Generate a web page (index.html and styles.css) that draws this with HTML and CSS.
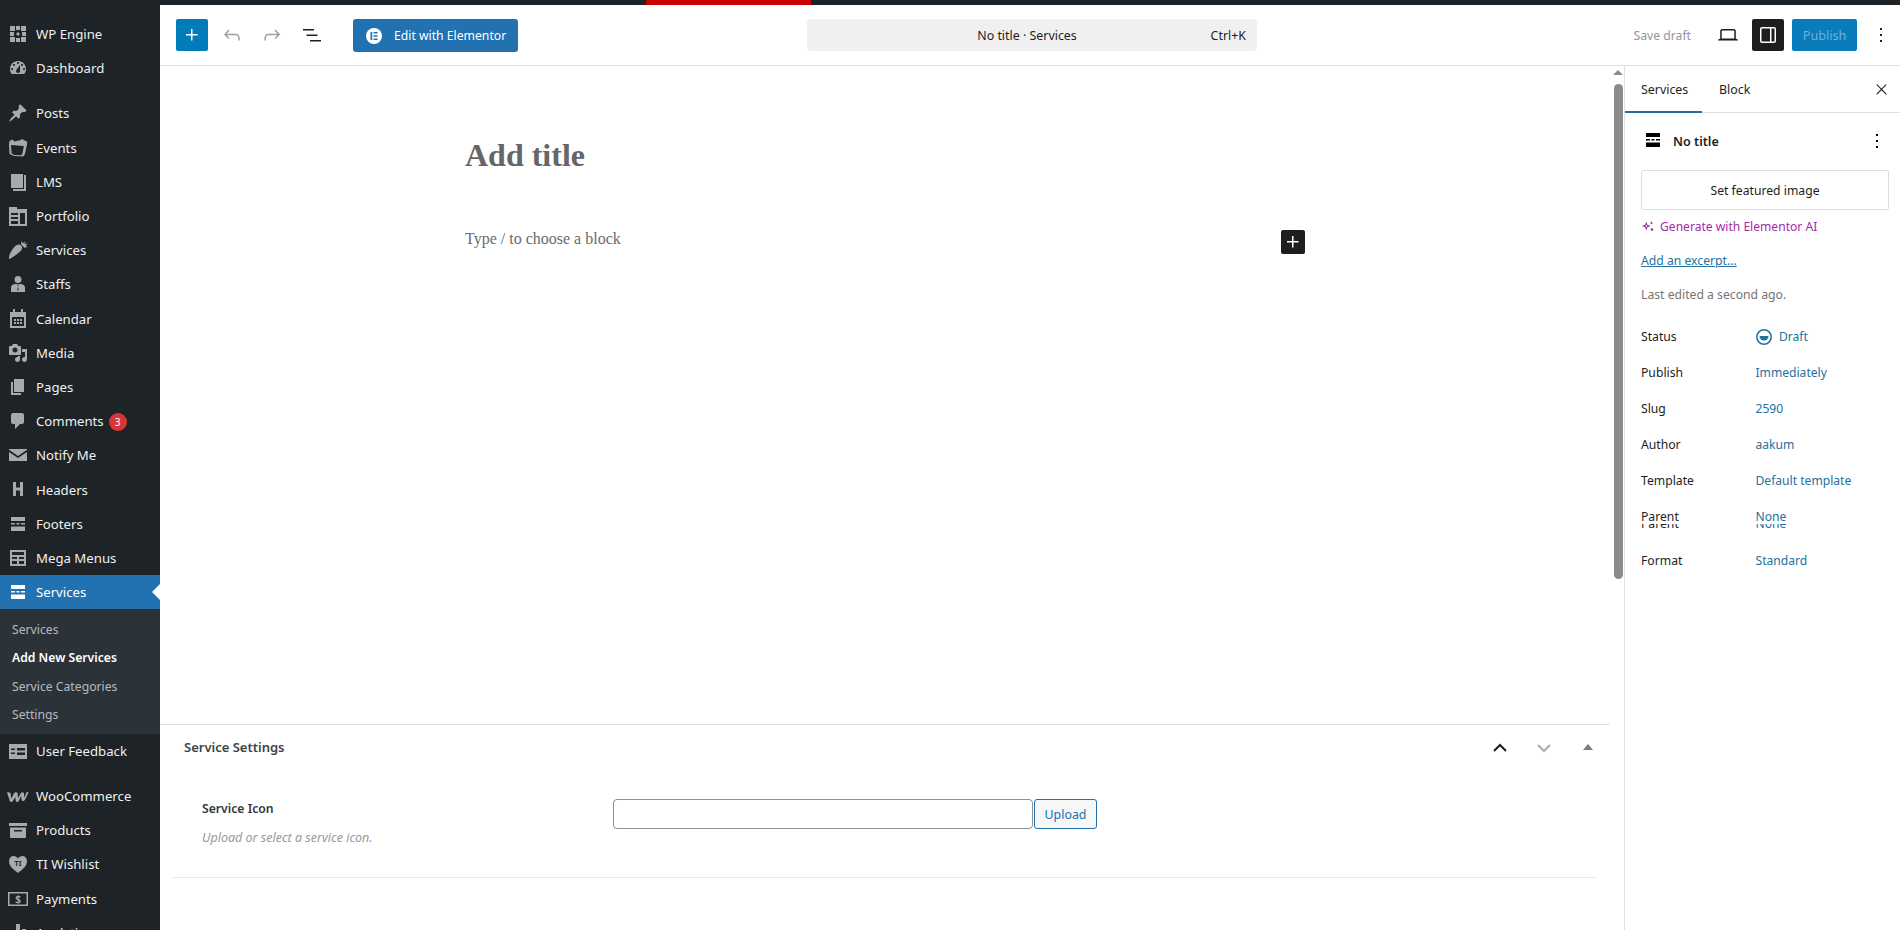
FILE: index.html
```html
<!DOCTYPE html>
<html lang="en">
<head>
<meta charset="utf-8">
<title>Add New Services</title>
<link rel="stylesheet" href="styles.css">
</head>
<body>
<div class="strip"><span class="strip-red"></span></div>
<div class="app">
  <nav class="adminmenu">
    <a class="mi"><svg class="ic" viewBox="0 0 20 20"><path d="M2 2h5v5H2zM8 2h4v4H8zM13 2h5v5h-5zM2 8h4v4H2zM14 8h4v4h-4zM2 13h5v5H2zM8 14h4v4H8zM13 13h5v5h-5zM10 8l2 2-2 2-2-2z"/></svg><span>WP Engine</span></a>
    <a class="mi"><svg class="ic" viewBox="0 0 20 20"><path fill-rule="evenodd" d="M3.76 16h12.48c1.1-1.37 1.76-3.11 1.76-5 0-4.42-3.58-8-8-8s-8 3.58-8 8c0 1.89.66 3.63 1.76 5zM10 4c.55 0 1 .45 1 1s-.45 1-1 1-1-.45-1-1 .45-1 1-1zM6 6c.55 0 1 .45 1 1s-.45 1-1 1-1-.45-1-1 .45-1 1-1zm8 0c.55 0 1 .45 1 1s-.45 1-1 1-1-.45-1-1 .45-1 1-1zm-5.37 5.55L12 7v6c0 1.1-.9 2-2 2s-2-.9-2-2c0-.57.24-1.08.63-1.45zM4 10c.55 0 1 .45 1 1s-.45 1-1 1-1-.45-1-1 .45-1 1-1zm12 0c.55 0 1 .45 1 1s-.45 1-1 1-1-.45-1-1 .45-1 1-1z"/></svg><span>Dashboard</span></a>
    <div class="sep"></div>
    <a class="mi"><svg class="ic" viewBox="0 0 20 20"><path d="M10.44 3.02l1.82-1.82 6.36 6.35-1.83 1.82c-1.05-.68-2.48-.57-3.41.36l-.75.75c-.92.93-1.04 2.35-.35 3.41l-1.83 1.82-2.41-2.41-2.8 2.79c-.42.42-3.38 2.71-3.8 2.29s1.86-3.39 2.28-3.81l2.79-2.79L4.1 9.36l1.83-1.82c1.05.69 2.48.57 3.4-.36l.75-.75c.93-.92 1.05-2.35.36-3.41z"/></svg><span>Posts</span></a>
    <a class="mi"><svg class="ic" viewBox="0 0 20 20"><path fill-rule="evenodd" d="M4 1.500l1.600.9.5 1.100 7-1.400.3-1.100 1.700.2.4 1.100 2.900.6.9 2.200-2.400 11.200-1.700 2.200-9.200-.6L1.600 16 .9 6 1.500 3.200zM3 7l.6 8.300 2.400 1.600 7.300.4 1-1.600L15.900 8z"/></svg><span>Events</span></a>
    <a class="mi"><svg class="ic" viewBox="0 0 20 20"><path d="M3 2h12v14H3zM16 3h2v16H5v-2h11z"/></svg><span>LMS</span></a>
    <a class="mi"><svg class="ic" viewBox="0 0 20 20"><path fill-rule="evenodd" d="M1 1h8v2h10v17H1zM3 7v2h7V7zm0 4v2h7v-2zm0 4v3h7v-3zM12 7v11h5V7z"/></svg><span>Portfolio</span></a>
    <a class="mi"><svg class="ic" viewBox="0 0 20 20"><path d="M1 19c-.5-2 1-6 3-9s4-5 6-5.500c1.500-.3 3.500.7 4 2.500.3 1.500-.5 3-2 4.500-3 3-8 6.500-11 7.500zM13 4.500l.5-3.500 1.300 2.500L17 1l-.5 3 3-.5-2 2.500 2.500.7-3.500 1z"/></svg><span>Services</span></a>
    <a class="mi"><svg class="ic" viewBox="0 0 20 20"><path fill-rule="evenodd" d="M10 2a3.500 3.500 0 1 1 0 7 3.500 3.500 0 0 1 0-7zM3 18v-4.500C3 11.500 5 10 7.500 10h5c2.500 0 4.500 1.500 4.500 3.500V18zM9 10.500l1 1.500-.6 4 .6 1 .6-1-.6-4 1-1.500z"/></svg><span>Staffs</span></a>
    <a class="mi"><svg class="ic" viewBox="0 0 20 20"><path fill-rule="evenodd" d="M5 0h2v3h6V0h2v3h3v16H2V3h3zM4 8v9h12V8zM6 10h2v2H6zm3 0h2v2H9zm3 0h2v2h-2zm-6 3h2v2H6zm3 0h2v2H9zm3 0h2v2h-2z"/></svg><span>Calendar</span></a>
    <a class="mi"><svg class="ic" viewBox="0 0 20 20"><path fill-rule="evenodd" d="M13 11V4c0-.55-.45-1-1-1h-1.670L9 1H5L3.670 3H2c-.55 0-1 .45-1 1v7c0 .55.45 1 1 1h10c.55 0 1-.45 1-1zM7 4.500c1.380 0 2.500 1.120 2.500 2.500S8.380 9.500 7 9.500 4.500 8.380 4.500 7 5.620 4.500 7 4.500zM14 6h5v10.500c0 1.380-1.120 2.500-2.500 2.500S14 17.880 14 16.500s1.120-2.500 2.500-2.500c.17 0 .34.02.5.05V9h-3V6zm-4 8.050V13h2v3.500c0 1.380-1.120 2.500-2.500 2.500S7 17.880 7 16.500 8.120 14 9.500 14c.17 0 .34.02.5.05z"/></svg><span>Media</span></a>
    <a class="mi"><svg class="ic" viewBox="0 0 20 20"><path d="M6 15V2h10v13H6zm-1 1h8v2H3V5h2v11z"/></svg><span>Pages</span></a>
    <a class="mi"><svg class="ic" viewBox="0 0 20 20"><path d="M5 2h9c1.100 0 2 .9 2 2v7c0 1.100-.9 2-2 2h-2l-5 5v-5H5c-1.100 0-2-.9-2-2V4c0-1.100.9-2 2-2z"/></svg><span>Comments</span><b class="badge">3</b></a>
    <a class="mi"><svg class="ic" viewBox="0 0 20 20"><path d="M1 4h18v.8L10 11 1 4.800zM1 7l9 6 9-6v9H1z"/></svg><span>Notify Me</span></a>
    <a class="mi"><svg class="ic" viewBox="0 0 20 20"><path d="M5 3h3v5.500h4V3h3v14h-3v-5.500H8V17H5z"/></svg><span>Headers</span></a>
    <a class="mi"><svg class="ic" viewBox="0 0 20 20"><path d="M3 3h14v4H3zM3 9h4v1.500H3zM8.500 9h3v1.500h-3zM13 9h4v1.500h-4zM3 12.500h14V17H3z"/></svg><span>Footers</span></a>
    <a class="mi"><svg class="ic" viewBox="0 0 20 20"><path fill-rule="evenodd" d="M2 2h16v16H2zM4 4v3h12V4zm0 5v2h5V9zm7 0v2h5V9zm-7 4v3h5v-3zm7 0v3h5v-3z"/></svg><span>Mega Menus</span></a>
    <a class="mi mi-active"><svg class="ic" viewBox="0 0 20 20"><path d="M3 3h14v4H3zM3 9h4v1.500H3zM8.500 9h3v1.500h-3zM13 9h4v1.500h-4zM3 12.500h14V17H3z"/></svg><span>Services</span></a>
    <div class="submenu">
      <a class="si">Services</a>
      <a class="si si-current">Add New Services</a>
      <a class="si">Service Categories</a>
      <a class="si">Settings</a>
    </div>
    <a class="mi"><svg class="ic" viewBox="0 0 20 20"><path fill-rule="evenodd" d="M1 3h18v15H1zM3 7.500V9h4V7.500zm0 4V13h4v-1.500zM9 7v2.500h8V7zm0 4.500V14h8v-2.500z"/></svg><span>User Feedback</span></a>
    <div class="sep"></div>
    <a class="mi"><svg class="ic ic-wide" viewBox="0 0 24 20"><path d="M0 6c2 0 3 .5 4 1l.5 6L8 6.500c1-1 3-1 3.500.5l.5 5.500L15 7c1-1.500 3-1.500 3.500 0l.5 5 2-5.500c.5-1 1.500-1 2.500-1-1 3-2.500 6-4.500 9.500-1 .8-2.500.8-3-.5l-.5-4.500L12.500 16c-1 .8-2.500.8-3-.5L9 11l-3 5c-1 .8-2.500.8-3-.5C2 12 1 9 0 6z"/></svg><span>WooCommerce</span></a>
    <a class="mi"><svg class="ic" viewBox="0 0 20 20"><path fill-rule="evenodd" d="M19 3v3H1V3zM2 7.500h16V17c0 .55-.45 1-1 1H3c-.55 0-1-.45-1-1zM6 10v1.500h8V10z"/></svg><span>Products</span></a>
    <a class="mi"><svg class="ic ic-wide" viewBox="0 0 20 20"><path d="M10 19C5 15 1 12 1 7c0-3 2-5 4.500-5C7.500 2 9 3 10 4.500 11 3 12.500 2 14.500 2 17 2 19 4 19 7c0 5-4 8-9 12z"/><text class="heart-text" x="10" y="11.500" text-anchor="middle">TI</text></svg><span>TI Wishlist</span></a>
    <a class="mi"><svg class="ic ic-wide" viewBox="0 0 20 20"><path fill-rule="evenodd" d="M0 3h20v14H0zM1.500 4.500v11h17v-11z"/><text class="pay-text" x="10" y="14" text-anchor="middle">$</text></svg><span>Payments</span></a>
    <a class="mi"><svg class="ic" viewBox="0 0 20 20"><path d="M8 1h4v18H8zM2 9h4v10H2zM14 6h4v13h-4z"/></svg><span>Analytics</span></a>
  </nav>

  <div class="workspace">
    <header class="toolbar">
      <button class="tb-btn tb-add"><svg viewBox="0 0 24 24"><path d="M11 12.500V17.500H12.500V12.500H17.500V11H12.500V6H11V11H6V12.500H11Z"/></svg></button>
      <button class="tb-btn tb-muted"><svg viewBox="0 0 24 24"><path d="M18.300 11.700c-.6-.6-1.400-.9-2.300-.9H6.700l2.900-3.300-1.100-1-4.500 5L8.500 16l1-1-2.700-2.700H16c.5 0 .9.2 1.300.5 1 1 1 3.400 1 4.500v.3h1.500v-.2c0-1.500 0-4.300-1.500-5.700z"/></svg></button>
      <button class="tb-btn tb-muted"><svg viewBox="0 0 24 24"><path d="M15.600 6.500l-1.100 1 2.900 3.300H8c-.9 0-1.700.3-2.300.9-1.400 1.500-1.400 4.200-1.400 5.600v.2h1.500v-.3c0-1.100 0-3.500 1-4.500.3-.3.7-.5 1.300-.5h9.200L14.500 15l1.100 1.100 4.600-4.600-4.600-5z"/></svg></button>
      <button class="tb-btn"><svg viewBox="0 0 24 24"><path d="M3 6h11v1.500H3V6Zm3.500 5.500h11V13h-11v-1.500ZM21 17H10v1.500h11V17Z"/></svg></button>
      <a class="elementor-btn"><span class="el-logo"><svg viewBox="0 0 16 16"><path d="M4.500 4h1.700v8H4.500zM7.500 4h4v1.500h-4zM7.500 7.200h4v1.500h-4zM7.500 10.500h4V12h-4z"/></svg></span>Edit with Elementor</a>
      <div class="command"><span class="command-title">No title · Services</span><span class="command-key">Ctrl+K</span></div>
      <div class="tb-right">
        <a class="save-draft">Save draft</a>
        <button class="tb-btn"><svg viewBox="0 0 24 24"><path d="M20.500 16h-.7V8c0-1.100-.9-2-2-2H6.200c-1.100 0-2 .9-2 2v8h-.7c-.8 0-1.500.7-1.500 1.500h20c0-.8-.7-1.500-1.500-1.500zM5.700 8c0-.3.2-.5.5-.5h11.600c.3 0 .5.2.5.5v7.600H5.700V8z"/></svg></button>
        <button class="tb-btn tb-pressed"><svg viewBox="0 0 24 24"><path d="M18 4H6c-1.100 0-2 .9-2 2v12c0 1.100.9 2 2 2h12c1.100 0 2-.9 2-2V6c0-1.100-.9-2-2-2zm-4 14.500H6c-.3 0-.5-.2-.5-.5V6c0-.3.2-.5.5-.5h8v13zm4.500-.5c0 .3-.2.5-.5.5h-2.500v-13H18c.3 0 .5.2.5.5v12z"/></svg></button>
        <button class="publish">Publish</button>
        <button class="tb-btn tb-last"><svg viewBox="0 0 24 24"><path d="M13 19h-2v-2h2v2zm0-6h-2v-2h2v2zm0-6h-2V5h2v2z"/></svg></button>
      </div>
    </header>

    <div class="body-row">
      <main class="editor">
        <section class="canvas">
          <div class="canvas-inner">
            <h1 class="post-title">Add title</h1>
            <div class="block-line">
              <p class="placeholder">Type / to choose a block</p>
              <span class="block-add"><svg viewBox="0 0 24 24"><path d="M11 12.500V17.500H12.500V12.500H17.500V11H12.500V6H11V11H6V12.500H11Z"/></svg></span>
            </div>
          </div>
        </section>
        <section class="metabox">
          <div class="metabox-head">
            <h2 class="metabox-title">Service Settings</h2>
            <div class="metabox-arrows">
              <svg class="mb-up" viewBox="0 0 16 16"><path d="M2 11l6-6 6 6" /></svg>
              <svg class="mb-down" viewBox="0 0 16 16"><path d="M2 5l6 6 6-6" /></svg>
              <svg class="mb-tri" viewBox="0 0 16 16"><path d="M8 4l5 6H3z"/></svg>
            </div>
          </div>
          <div class="field">
            <div class="field-label">
              <label class="field-name">Service Icon</label>
              <p class="field-desc">Upload or select a service icon.</p>
            </div>
            <input class="field-input" type="text">
            <button class="field-upload">Upload</button>
          </div>
        </section>
      </main>

      <div class="scrollbar"><span class="sb-arrow"></span><span class="sb-thumb"></span></div>

      <aside class="panel">
        <div class="tabs">
          <span class="tab tab-active">Services</span>
          <span class="tab">Block</span>
          <svg class="tab-close" viewBox="0 0 24 24"><path d="M13 11.800l6.100-6.300-1-1-6.100 6.200-6.100-6.200-1 1 6.100 6.300-6.500 6.700 1 1 6.500-6.600 6.500 6.600 1-1z"/></svg>
        </div>
        <div class="panel-body">
          <div class="doc-row">
            <svg class="doc-icon" viewBox="0 0 20 20"><path d="M3 3h14v4H3zM3 9h4v1.500H3zM8.500 9h3v1.500h-3zM13 9h4v1.500h-4zM3 12.500h14V17H3z"/></svg>
            <strong class="doc-title">No title</strong>
            <svg class="doc-dots" viewBox="0 0 24 24"><path d="M13 19h-2v-2h2v2zm0-6h-2v-2h2v2zm0-6h-2V5h2v2z"/></svg>
          </div>
          <button class="featured">Set featured image</button>
          <a class="ai-link"><svg viewBox="0 0 16 16"><path d="M6 3l1.300 3.700L11 8 7.300 9.300 6 13 4.700 9.300 1 8l3.700-1.300zM6 6.500L5.500 7.500 4.500 8l1 .5.5 1 .5-1 1-.5-1-.5zM12 2.500l.6 1.400 1.400.6-1.400.6-.6 1.400-.6-1.400L10 4.500l1.400-.6zM12.500 10.500a1.500 1.500 0 1 1 0 3 1.500 1.500 0 0 1 0-3z"/></svg>Generate with Elementor AI</a>
          <a class="excerpt">Add an excerpt...</a>
          <p class="edited">Last edited a second ago.</p>
          <div class="rows">
            <div class="row"><span class="row-k">Status</span><span class="row-v row-status"><svg viewBox="0 0 20 20"><path fill-rule="evenodd" d="M10 2a8 8 0 1 1 0 16 8 8 0 0 1 0-16zm0 1.500a6.500 6.500 0 1 0 0 13 6.500 6.500 0 0 0 0-13z"/><path d="M5.500 9h9a4.500 4.500 0 0 1-9 0z"/></svg>Draft</span></div>
            <div class="row"><span class="row-k">Publish</span><span class="row-v">Immediately</span></div>
            <div class="row"><span class="row-k">Slug</span><span class="row-v">2590</span></div>
            <div class="row"><span class="row-k">Author</span><span class="row-v">aakum</span></div>
            <div class="row"><span class="row-k">Template</span><span class="row-v">Default template</span></div>
            <div class="row row-parent"><span class="row-k">Parent</span><span class="row-v">None</span></div>
            <div class="ghost"><div class="row ghost-row"><span class="row-k">Parent</span><span class="row-v">None</span></div></div>
            <div class="row row-format"><span class="row-k">Format</span><span class="row-v">Standard</span></div>
          </div>
        </div>
      </aside>
    </div>
  </div>
</div>
</body>
</html>
```
FILE: styles.css
```css
* { box-sizing: border-box; }
html, body { margin: 0; height: 930px; overflow: hidden; background: #fff; }
body { font-family: "Noto Sans", "Open Sans", Arial, sans-serif; font-size: 13px; color: #1e1e1e; }
button, input { font-family: inherit; }
p, h1, h2 { margin: 0; }

.strip { height: 5px; background: #1d2327; padding-left: 646px; display: flex; }
.strip-red { width: 165px; background: #c90000; }
.app { display: flex; height: 925px; }

/* admin menu */
.adminmenu { width: 160px; flex: none; background: #1d2327; padding-top: 12px; overflow: hidden; }
.mi { display: flex; align-items: center; height: 34.2px; padding-left: 36px; position: relative; color: #f0f0f0; font-size: 13.2px; white-space: nowrap; }
.ic { position: absolute; left: 8px; top: 7px; width: 20px; height: 20px; fill: #a7aaad; }
.ic-wide { left: 7px; width: 22px; }
.sep { height: 11px; }
.heart-text { font: 700 7px "Noto Sans", sans-serif; fill: #1d2327; }
.pay-text { font: 700 10px "Noto Sans", sans-serif; fill: #a7aaad; }
.badge { margin: 2px 0 0 5px; width: 18px; height: 18px; border-radius: 50%; background: #d63638; color: #fff; font-size: 10px; font-weight: 400; line-height: 18px; text-align: center; }
.mi-active { background: #2271b1; color: #fff; }
.mi-active .ic { fill: #fff; }
.mi-active::after { content: ""; position: absolute; right: 0; top: 9px; border: 8px solid transparent; border-right-color: #fff; border-left-width: 0; }
.submenu { background: #2c3338; padding: 6px 0 5px; }
.si { display: flex; align-items: center; height: 28.4px; padding-left: 12px; color: rgba(240, 246, 252, .7); font-size: 12.2px; white-space: nowrap; }
.si-current { color: #fff; font-weight: 600; }

/* toolbar */
.workspace { flex: 1; min-width: 0; display: flex; flex-direction: column; }
.toolbar { height: 61px; flex: none; border-bottom: 1px solid #e0e0e0; padding: 14px 3px 0 16px; display: flex; align-items: flex-start; gap: 8px; }
.tb-btn { width: 32px; height: 32px; flex: none; padding: 0; border: 0; border-radius: 2px; background: none; display: flex; align-items: center; justify-content: center; }
.tb-btn svg { width: 24px; height: 24px; fill: #1e1e1e; }
.tb-add { background: #007cba; }
.tb-add svg { fill: #fff; }
.tb-muted svg { fill: #a0a0a0; }
.tb-pressed { background: #1e1e1e; }
.tb-pressed svg { fill: #fff; }
.elementor-btn { margin-left: 17px; width: 165px; height: 33px; background: #2271b1; border-radius: 3px; color: #fff; display: flex; align-items: center; padding-left: 13px; gap: 12px; font-size: 12.2px; white-space: nowrap; }
.el-logo { width: 16px; height: 16px; border-radius: 50%; background: #fff; display: flex; }
.el-logo svg { width: 16px; height: 16px; fill: #2271b1; }
.command { margin-left: 281px; width: 450px; height: 32px; background: #f0f0f0; border-radius: 4px; display: flex; align-items: center; position: relative; justify-content: center; padding-right: 10px; font-size: 12.4px; }
.command-title { color: #1e1e1e; }
.command-key { position: absolute; right: 11px; }
.tb-right { margin-left: auto; display: flex; align-items: center; gap: 8px; height: 32px; }
.save-draft { color: #949494; margin-right: 13px; font-size: 12.2px; }
.publish { width: 65px; height: 32px; border: 0; border-radius: 2px; background: #0a7cbb; color: #6fb1d8; font-size: 12.6px; padding: 0; }
.tb-last { margin-left: 0; }

/* body */
.body-row { flex: 1; display: flex; min-height: 0; }
.editor { width: 1452px; flex: none; display: flex; flex-direction: column; }
.canvas { height: 658px; flex: none; }
.canvas-inner { width: 840px; margin-left: 305px; padding-top: 69px; }
.post-title { font: 700 32px/40px "Liberation Serif", serif; color: #666; }
.block-line { display: flex; justify-content: space-between; align-items: flex-start; margin-top: 47px; }
.placeholder { font: 16px/32px "Liberation Serif", serif; color: #6a6a6a; margin-top: 1px; }
.block-add { width: 24px; height: 24px; margin-top: 8px; background: #1e1e1e; border-radius: 2px; display: flex; }
.block-add svg { width: 24px; height: 24px; fill: #fff; }

.metabox { flex: 1; margin-right: 2px; border-top: 1px solid #e0e0e0; padding: 0 13px 0 12px; }
.metabox-head { height: 45px; display: flex; align-items: center; justify-content: space-between; padding-left: 12px; }
.metabox-title { font-size: 13px; font-weight: 600; color: #3c434a; margin-top: -1px; }
.metabox-arrows { display: flex; gap: 28px; margin-right: 1px; }
.metabox-arrows svg { width: 16px; height: 16px; fill: none; stroke-width: 2; }
.mb-up { stroke: #1e1e1e; }
.mb-down { stroke: #a7aaad; }
.metabox-arrows .mb-tri { fill: #787c82; }
.field { height: 108px; border-bottom: 1px solid #e8e8e8; padding: 29px 0 0 30px; display: flex; align-items: flex-start; }
.field-label { width: 411px; flex: none; margin-top: 1px; }
.field-name { display: block; font-size: 12.2px; font-weight: 600; line-height: 18px; color: #32373c; }
.field-desc { margin-top: 11px; font-size: 12.5px; font-style: italic; line-height: 18px; color: #999; }
.field-input { width: 420px; height: 30px; border: 1px solid #8c8f94; border-radius: 4px; background: #fff; padding: 0; }
.field-upload { width: 63px; height: 30px; margin-left: 1px; border: 1px solid #2271b1; border-radius: 3px; background: #f6f7f7; color: #2271b1; font-size: 12.4px; padding: 0; }

.scrollbar { width: 12px; flex: none; padding-top: 4px; display: flex; flex-direction: column; align-items: center; }
.sb-arrow { border: 5px solid transparent; border-top-width: 0; border-bottom-color: #8b8b8b; }
.sb-thumb { width: 9px; height: 495px; margin-top: 9px; border-radius: 5px; background: #8b8b8b; }

/* settings panel */
.panel { flex: 1; min-width: 0; border-left: 1px solid #e0e0e0; }
.tabs { height: 47px; border-bottom: 1px solid #e0e0e0; display: flex; align-items: stretch; position: relative; }
.tab { display: flex; align-items: center; padding: 0 16px; font-size: 12.4px; color: #1e1e1e; }
.tab-active { width: 77px; box-shadow: inset 0 -2px 0 #1f6f9f; margin-bottom: -1px; }
.tab + .tab { margin-left: 1px; }
.tab-close { position: absolute; right: 10px; top: 15px; width: 17px; height: 17px; fill: #1e1e1e; }
.panel-body { padding: 0 11px 0 16px; font-size: 12.2px; }
.doc-row { height: 57px; display: flex; align-items: center; position: relative; }
.doc-icon { width: 20px; height: 20px; margin-left: 2px; margin-top: -4px; flex: none; }
.doc-title { margin-left: 10px; margin-top: -1px; font-weight: 600; font-size: 12.6px; }
.doc-dots { position: absolute; right: 0; top: 16px; width: 24px; height: 24px; }
.featured { display: block; width: 248px; height: 40px; border: 1px solid #ddd; border-radius: 2px; background: #fff; color: #1e1e1e; font-size: 12.2px; padding: 0; }
.ai-link { display: flex; align-items: center; gap: 5px; margin-top: 6px; height: 20px; color: #a22ca6; font-size: 12.1px; }
.ai-link svg { width: 14px; height: 14px; fill: #a22ca6; }
.excerpt { display: block; margin-top: 15px; line-height: 20px; color: #2271a1; text-decoration: underline; }
.edited { margin-top: 14px; line-height: 20px; color: #757575; font-size: 12.2px; }
.rows { margin-top: 14px; }
.row { display: flex; height: 36px; line-height: 36px; }
.row-k { width: 114.5px; flex: none; color: #1e1e1e; }
.row-v { color: #2271a1; font-size: 12.1px; }
.row-status { display: flex; align-items: center; gap: 6px; margin-left: -1.5px; }
.row-status svg { width: 20px; height: 20px; fill: #2271a1; margin: -1px -1px 0 0; }
.row-parent { height: 25px; }
.ghost { height: 5px; overflow: hidden; }
.ghost-row { margin-top: -18px; }
.row-format { margin-top: 14px; }
```
